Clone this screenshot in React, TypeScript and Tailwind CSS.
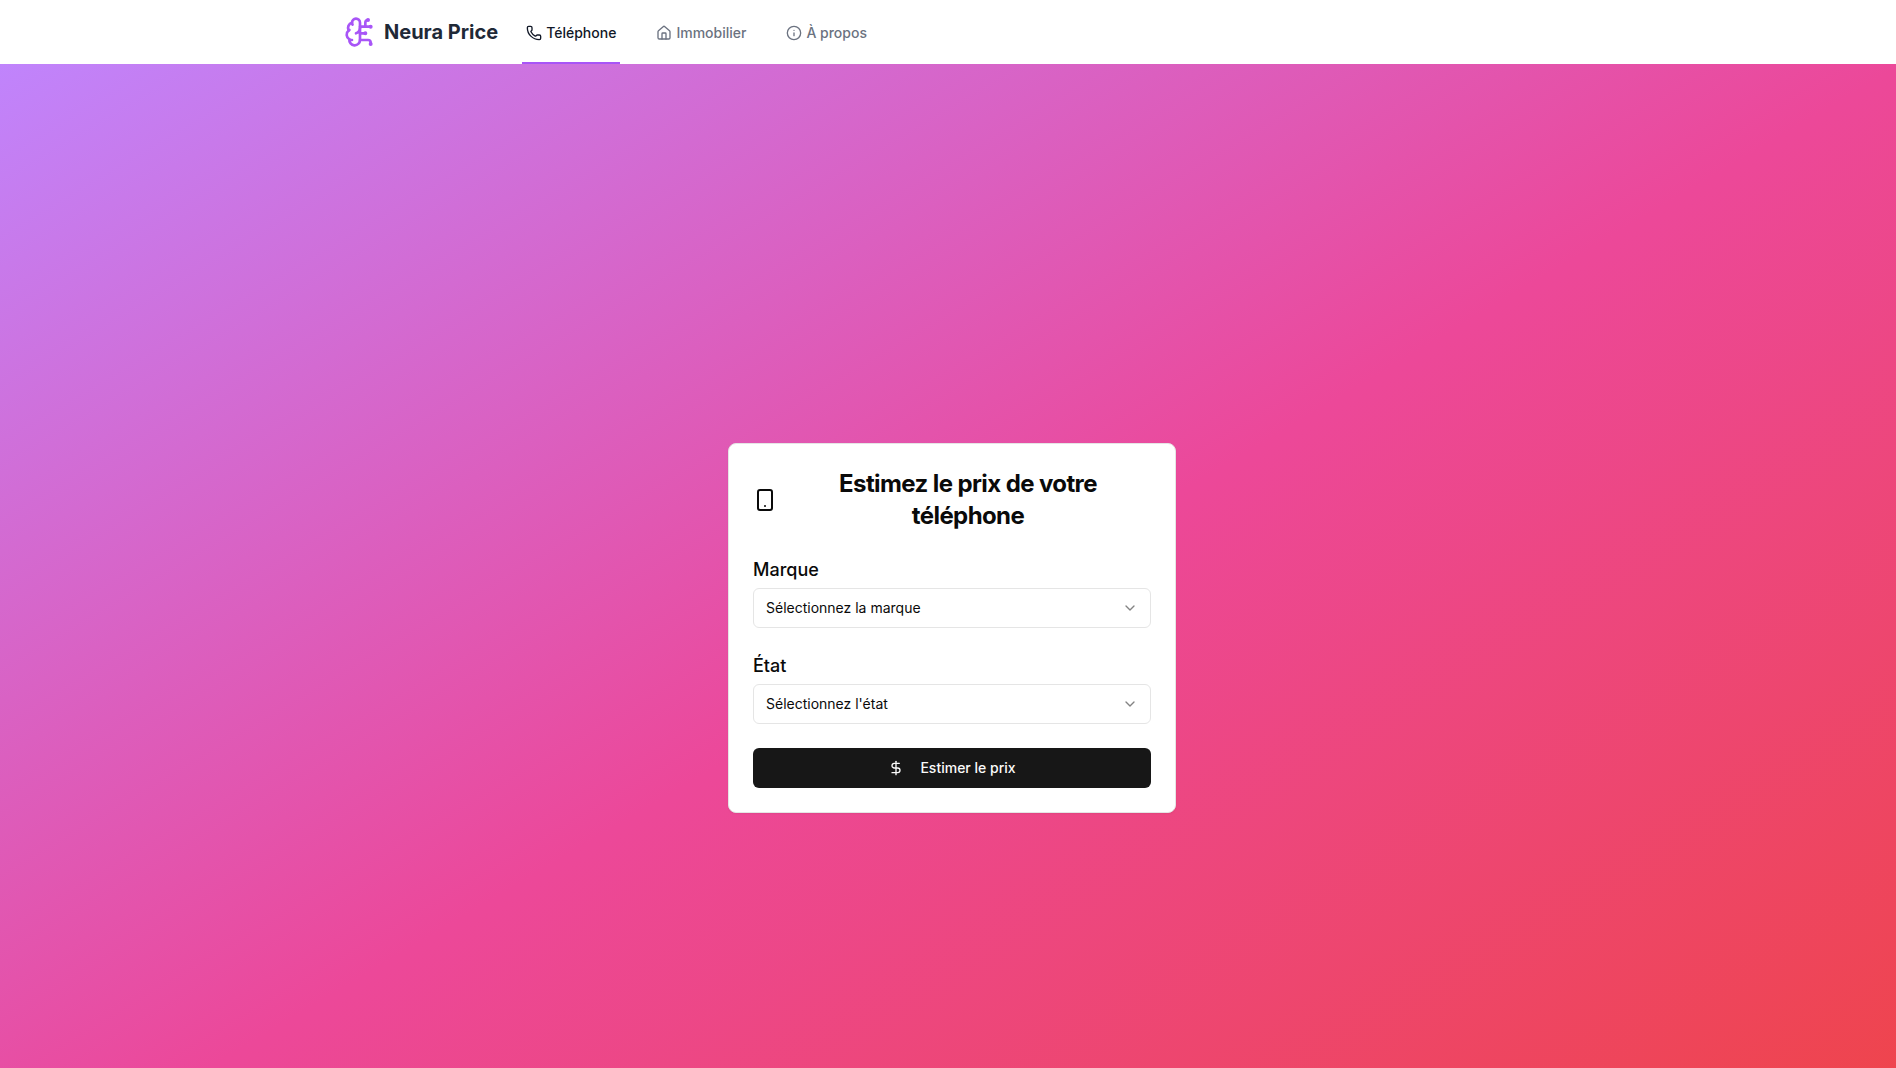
import { BrainCircuit, Phone, Home, Info, Smartphone, ChevronDown, DollarSign } from "lucide-react";

const links = [
  { label: "Téléphone", icon: Phone, active: true },
  { label: "Immobilier", icon: Home, active: false },
  { label: "À propos", icon: Info, active: false },
];

function Navbar() {
  return (
    <nav className="shrink-0 bg-white">
      <div className="mx-auto flex h-16 max-w-7xl px-8">
        <a href="#" className="flex items-center">
          <BrainCircuit className="h-8 w-8 text-[#a855f7]" />
          <span className="ml-2 text-xl font-bold text-[#1f2937]">Neura Price</span>
        </a>
        <div className="ml-6 flex gap-8">
          {links.map(({ label, icon: Icon, active }) => (
            <a
              key={label}
              href="#"
              className={
                active
                  ? "flex items-center border-b-2 border-[#a855f7] px-1 pt-1 text-sm font-medium text-[#111827]"
                  : "flex items-center border-b-2 border-transparent px-1 pt-1 text-sm font-medium text-[#6b7280]"
              }
            >
              <Icon className="mr-1 h-4 w-4" />
              {label}
            </a>
          ))}
        </div>
      </div>
    </nav>
  );
}

function Field({ id, label, placeholder }: { id: string; label: string; placeholder: string }) {
  return (
    <div className="flex flex-col gap-1">
      <label htmlFor={id} className="text-lg/7 font-medium">
        {label}
      </label>
      <div className="relative">
        <select
          id={id}
          className="h-10 w-full appearance-none rounded-md border border-[#e5e5e5] bg-white px-3 text-sm"
        >
          <option>{placeholder}</option>
        </select>
        <ChevronDown className="pointer-events-none absolute top-3 right-[13px] h-4 w-4 opacity-50" />
      </div>
    </div>
  );
}

export default function App() {
  return (
    <div className="h-screen overflow-hidden">
      <div className="-mr-2 flex flex-col font-['Inter',sans-serif] text-[#0a0a0a]">
        <Navbar />
        <main className="flex min-h-[calc(100vh+60px)] items-center justify-center bg-linear-to-br/srgb from-[#c084fc] via-[#ec4899] to-[#ef4444]">
          <div className="w-full max-w-md rounded-lg border border-[#e5e5e5] bg-white p-6 shadow-xs">
            <h1 className="flex items-center text-center text-2xl font-bold tracking-tight">
              <Smartphone className="mr-2 h-6 w-6 shrink-0" />
              <span className="flex-1">Estimez le prix de votre téléphone</span>
            </h1>
            <form className="mt-6 flex flex-col gap-6">
              <Field id="brand" label="Marque" placeholder="Sélectionnez la marque" />
              <Field id="state" label="État" placeholder="Sélectionnez l'état" />
              <button
                type="button"
                className="flex h-10 w-full items-center justify-center gap-4 rounded-md bg-[#171717] text-sm font-medium text-[#fafafa]"
              >
                <DollarSign className="h-4 w-4" />
                Estimer le prix
              </button>
            </form>
          </div>
        </main>
      </div>
    </div>
  );
}
